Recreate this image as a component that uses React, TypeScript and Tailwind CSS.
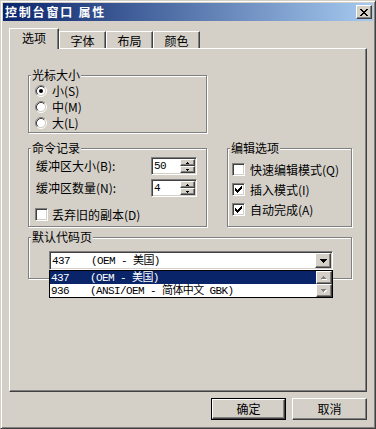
import React from "react";

const raised =
  "border border-t-white border-l-white border-r-[#404040] border-b-[#404040] shadow-[inset_-1px_-1px_0_#808080]";
const sunken =
  "border border-t-[#808080] border-l-[#808080] border-r-white border-b-white shadow-[inset_1px_1px_0_#404040,inset_-1px_-1px_0_#d4d0c8]";
const mono = "font-['Liberation_Mono','Noto_Sans_CJK_SC',monospace] text-[11px] tracking-[-0.6px]";

function Pixels({ rows, color, dx = 0, dy = 0 }: { rows: string[]; color: string; dx?: number; dy?: number }) {
  return (
    <>
      {rows.flatMap((r, y) =>
        r.split("").map((c, x) =>
          c === "#" ? <rect key={`${color}-${x}-${y}`} x={x + dx} y={y + dy} width="1" height="1" fill={color} /> : null
        )
      )}
    </>
  );
}

const CHECK = ["......#", ".....##", "#...###", "##.###.", "#####..", ".###...", "..#...."];
const CLOSE = ["##....##", ".##..##.", "..####..", "...##...", "..####..", ".##..##.", "##....##"];
const DOWN = ["#######", ".#####.", "..###..", "...#..."];
const SMALL_UP = [".#.", "###"];
const SMALL_DOWN = ["###", ".#."];
const SCR_UP = ["..#..", ".###.", "#####"];
const SCR_DOWN = ["#####", ".###.", "..#.."];

function Checkbox({ checked }: { checked?: boolean }) {
  return (
    <div className={`w-[13px] h-[13px] bg-white shrink-0 ${sunken}`}>
      {checked && (
        <svg width="11" height="11" className="block">
          <Pixels rows={CHECK} color="#000" dx={2} dy={2} />
        </svg>
      )}
    </div>
  );
}

function Radio({ checked }: { checked?: boolean }) {
  return (
    <svg width="12" height="12" viewBox="0 0 12 12" className="block shrink-0">
      <circle cx="6" cy="6" r="4.2" fill="#fff" />
      <path d="M2.11 9.89 A5.5 5.5 0 0 1 9.89 2.11" stroke="#808080" strokeWidth="1" fill="none" />
      <path d="M9.89 2.11 A5.5 5.5 0 0 1 2.11 9.89" stroke="#fff" strokeWidth="1" fill="none" />
      <path d="M2.82 9.18 A4.5 4.5 0 0 1 9.18 2.82" stroke="#404040" strokeWidth="1" fill="none" />
      <path d="M9.18 2.82 A4.5 4.5 0 0 1 2.82 9.18" stroke="#d4d0c8" strokeWidth="1" fill="none" />
      {checked && <circle cx="6" cy="6" r="2" fill="#000" />}
    </svg>
  );
}

function GroupBox({ label, className, children }: { label: string; className: string; children?: React.ReactNode }) {
  return (
    <div className={`relative border border-[#808080] shadow-[inset_1px_1px_0_#fff,1px_1px_0_#fff] ${className}`}>
      <span className="absolute left-[2px] -top-[8px] bg-[#d4d0c8] px-[1px] leading-[14px] whitespace-nowrap">{label}</span>
      {children}
    </div>
  );
}

function Spin({ value }: { value: string }) {
  return (
    <div className={`w-[46px] h-[18px] bg-white flex p-[1px] ${sunken}`}>
      <div className={`flex-1 pl-[1px] leading-[14px] ${mono}`}>{value}</div>
      <div className="w-[15px] flex flex-col">
        <div className={`h-[7px] bg-[#d4d0c8] flex items-center justify-center ${raised}`}>
          <svg width="3" height="2" className="block">
            <Pixels rows={SMALL_UP} color="#000" />
          </svg>
        </div>
        <div className={`h-[7px] bg-[#d4d0c8] flex items-center justify-center ${raised}`}>
          <svg width="3" height="2" className="block">
            <Pixels rows={SMALL_DOWN} color="#000" />
          </svg>
        </div>
      </div>
    </div>
  );
}

function Tab({ label, selected }: { label: string; selected?: boolean }) {
  return selected ? (
    <div className="relative z-10 -mb-[1px] w-[50px] h-[21px] bg-[#d4d0c8] border-t border-l border-r border-t-white border-l-white border-r-[#404040] shadow-[inset_-1px_0_0_#808080] flex justify-center pt-[2px] leading-[14px]">
      {label}
    </div>
  ) : (
    <div className="w-[47px] h-[17px] bg-[#d4d0c8] border-t border-l border-r border-t-white border-l-white border-r-[#404040] shadow-[inset_-1px_0_0_#808080] flex justify-center pt-[2px] leading-[14px]">
      {label}
    </div>
  );
}

function ScrollBtn({ up }: { up?: boolean }) {
  return (
    <div className={`h-[13px] bg-[#d4d0c8] flex items-center justify-center ${raised}`}>
      <svg width="6" height="4" className="block">
        <Pixels rows={up ? SCR_UP : SCR_DOWN} color="#fff" dx={1} dy={1} />
        <Pixels rows={up ? SCR_UP : SCR_DOWN} color="#808080" />
      </svg>
    </div>
  );
}

export default function App() {
  return (
    <div className="w-[376px] h-[429px] bg-[#d4d0c8] font-['Noto_Sans_CJK_SC',sans-serif] text-[12px] leading-[14px] text-black border border-t-[#d4d0c8] border-l-[#d4d0c8] border-r-[#404040] border-b-[#404040] shadow-[inset_1px_1px_0_#fff,inset_-1px_-1px_0_#808080] p-[2px] flex flex-col">
      {/* Title bar */}
      <div className="h-[18px] shrink-0 flex items-center justify-between bg-[linear-gradient(to_right,#0a246a,#a6caf0)] pl-[2px] pr-[1px]">
        <span className="text-white font-bold text-[12px] tracking-[1.8px] whitespace-pre">控制台窗口 属性</span>
        <div className={`w-[16px] h-[14px] bg-[#d4d0c8] flex items-center justify-center ${raised}`}>
          <svg width="8" height="7" className="block">
            <Pixels rows={CLOSE} color="#000" />
          </svg>
        </div>
      </div>

      {/* Tabs */}
      <div className="mt-[7px] h-[20px] shrink-0 flex items-end pl-[6px]">
        <Tab label="选项" selected />
        <Tab label="字体" />
        <Tab label="布局" />
        <Tab label="颜色" />
      </div>

      {/* Panel */}
      <div className="mx-[6px] h-[344px] shrink-0 border border-t-white border-l-white border-r-[#404040] border-b-[#404040] shadow-[inset_-1px_-1px_0_#808080] pl-[18px] pt-[26px] flex flex-col">
        <GroupBox label="光标大小" className="w-[179px] h-[58px] shrink-0">
          <div className="flex flex-col pl-[6px] pt-[7px]">
            {[
              ["小(S)", true],
              ["中(M)", false],
              ["大(L)", false],
            ].map(([t, c]) => (
              <div key={t as string} className="h-[16px] flex items-center gap-[5px]">
                <Radio checked={c as boolean} />
                <span>{t as string}</span>
              </div>
            ))}
          </div>
        </GroupBox>

        <div className="mt-[15px] flex items-start shrink-0">
          <GroupBox label="命令记录" className="w-[179px] h-[79px] shrink-0">
            <div className="flex flex-col pl-[7px] pt-[8px]">
              <div className="h-[18px] flex items-center">
                <span className="w-[115px]">缓冲区大小(B):</span>
                <Spin value="50" />
              </div>
              <div className="mt-[4px] h-[18px] flex items-center">
                <span className="w-[115px]">缓冲区数量(N):</span>
                <Spin value="4" />
              </div>
              <div className="mt-[11px] -ml-[1px] h-[13px] flex items-center gap-[4px]">
                <Checkbox />
                <span>丢弃旧的副本(D)</span>
              </div>
            </div>
          </GroupBox>

          <GroupBox label="编辑选项" className="ml-[20px] w-[125px] h-[79px] shrink-0">
            <div className="flex flex-col pl-[4px] pt-[14px] gap-[7px]">
              <div className="h-[13px] flex items-center gap-[5px]">
                <Checkbox />
                <span>快速编辑模式(Q)</span>
              </div>
              <div className="h-[13px] flex items-center gap-[5px]">
                <Checkbox checked />
                <span>插入模式(I)</span>
              </div>
              <div className="h-[13px] flex items-center gap-[5px]">
                <Checkbox checked />
                <span>自动完成(A)</span>
              </div>
            </div>
          </GroupBox>
        </div>

        <GroupBox label="默认代码页" className="mt-[10px] w-[324px] h-[42px] shrink-0">
          <div className="pl-[20px] pt-[13px]">
            <div className={`relative w-[284px] h-[19px] bg-white flex p-[1px] ${sunken}`}>
              <div className={`flex-1 flex items-center pl-[1px] whitespace-pre ${mono}`}>
                <span className="w-[39px]">437</span>
                <span>(OEM - 美国)</span>
              </div>
              <div className={`w-[16px] h-[15px] bg-[#d4d0c8] flex items-center justify-center ${raised}`}>
                <svg width="7" height="4" className="block">
                  <Pixels rows={DOWN} color="#000" />
                </svg>
              </div>

              {/* Open dropdown list */}
              <div className="absolute z-20 -left-[1px] top-[18px] w-[284px] h-[28px] bg-white border border-black flex">
                <div className={`flex-1 flex flex-col whitespace-pre ${mono}`}>
                  <div className="h-[13px] bg-[#0a246a] text-white flex items-center pl-[1px]">
                    <span className="w-[39px]">437</span>
                    <span>(OEM - 美国)</span>
                  </div>
                  <div className="h-[13px] flex items-center pl-[1px]">
                    <span className="w-[39px]">936</span>
                    <span>(ANSI/OEM - 简体中文 GBK)</span>
                  </div>
                </div>
                <div className="w-[16px] flex flex-col">
                  <ScrollBtn up />
                  <ScrollBtn />
                </div>
              </div>
            </div>
          </div>
        </GroupBox>
      </div>

      {/* Buttons */}
      <div className="mt-[6px] flex justify-end gap-[6px] pr-[6px] shrink-0">
        <div className="w-[75px] h-[22px] border border-black">
          <div className={`w-full h-full flex items-center justify-center bg-[#d4d0c8] ${raised}`}>确定</div>
        </div>
        <div className={`w-[75px] h-[22px] flex items-center justify-center bg-[#d4d0c8] ${raised}`}>取消</div>
      </div>
    </div>
  );
}
